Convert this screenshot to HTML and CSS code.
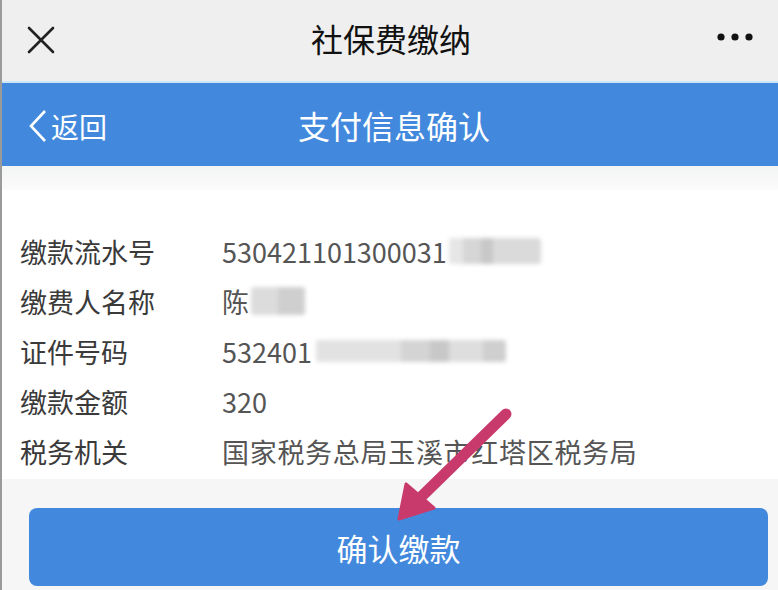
FILE: index.html
```html
<!DOCTYPE html>
<html lang="zh">
<head>
<meta charset="utf-8">
<link rel="stylesheet" href="styles.css">
</head>
<body>
<div class="page">
  <header class="topbar">
    <svg class="close" width="30" height="30" viewBox="0 0 30 30"><path d="M3 3 L27 27 M27 3 L3 27" stroke="#222" stroke-width="2.6" stroke-linecap="round" fill="none"/></svg>
    <div class="toptitle">社保费缴纳</div>
    <svg class="more" width="40" height="10" viewBox="0 0 40 10"><circle cx="4" cy="5" r="3.6" fill="#111"/><circle cx="18" cy="5" r="3.6" fill="#111"/><circle cx="32" cy="5" r="3.6" fill="#111"/></svg>
  </header>
  <nav class="bluebar">
    <div class="back">
      <svg width="20" height="34" viewBox="0 0 20 34"><path d="M17 2 L3 17 L17 32" stroke="#fff" stroke-width="2.6" fill="none" stroke-linejoin="miter"/></svg>
      <span>返回</span>
    </div>
    <div class="bluetitle">支付信息确认</div>
  </nav>
  <div class="strip"></div>
  <main class="content">
    <div class="row"><span class="label">缴款流水号</span><span class="value">530421101300031<span class="blur b1"></span></span></div>
    <div class="row"><span class="label">缴费人名称</span><span class="value">陈<span class="blur b2"></span></span></div>
    <div class="row"><span class="label">证件号码</span><span class="value">532401<span class="blur b3"></span></span></div>
    <div class="row"><span class="label">缴款金额</span><span class="value">320</span></div>
    <div class="row"><span class="label">税务机关</span><span class="value cjk">国家税务总局玉溪市红塔区税务局</span></div>
  </main>
  <footer class="footer">
    <button class="confirm">确认缴款</button>
  </footer>
  <svg class="arrow" width="778" height="590" viewBox="0 0 778 590">
    <path d="M506 414 L420 498" stroke="#c93a6c" stroke-width="11" stroke-linecap="round" fill="none"/>
    <path d="M399 519 L406 484 L434 508 Z" fill="#c93a6c" stroke="#c93a6c" stroke-width="3" stroke-linejoin="round"/>
  </svg>
</div>
</body>
</html>
```
FILE: styles.css
```css
* { box-sizing: border-box; margin: 0; padding: 0; }
html, body { width: 778px; height: 590px; overflow: hidden; }
body {
  font-family: "Noto Sans CJK SC", "Noto Sans", sans-serif;
  background: #fff;
}
.page {
  position: relative;
  width: 778px;
  height: 590px;
  border-left: 2px solid #9a9a9a;
  display: flex;
  flex-direction: column;
}
.topbar {
  height: 83px;
  background: #efefef;
  border-bottom: 2px solid #cfe6f6;
  display: flex;
  align-items: center;
  justify-content: space-between;
  padding: 0 21px 4px 24px;
  position: relative;
}
.toptitle {
  position: absolute;
  left: 0; right: 0;
  top: 18px;
  text-align: center;
  font-size: 32px;
  line-height: 40px;
  color: #111;
  pointer-events: none;
  padding-left: 2px;
}
.close { margin-top: 2px; }
.more { margin-top: -4px; }
.bluebar {
  height: 83px;
  background: #4289dd;
  display: flex;
  align-items: center;
  position: relative;
  padding-left: 26px;
}
.back {
  display: flex;
  align-items: center;
  gap: 3px;
  color: #fff;
  font-size: 28px;
  margin-top: 2px;
}
.bluetitle {
  position: absolute;
  left: 0; right: 0;
  top: 22px;
  text-align: center;
  color: #fff;
  font-size: 32px;
  line-height: 40px;
  padding-left: 8px;
}
.strip {
  height: 24px;
  background: linear-gradient(#f3f4f4, #fbfbfb);
}
.content {
  background: #fff;
  padding: 36px 0 0 18px;
  height: 289px;
}
.row {
  display: flex;
  align-items: center;
  height: 50px;
  font-size: 27px;
}
.label {
  width: 202px;
  color: #3a3a3a;
}
.value {
  color: #555;
  display: flex;
  align-items: center;
}
.cjk { letter-spacing: 0.7px; }
.blur {
  display: inline-block;
  filter: blur(2px);
  border-radius: 3px;
}
.b1 {
  width: 92px; height: 26px;
  background: linear-gradient(90deg, #e6e6e6 0 15%, #d6d6d6 15% 35%, #c8c8c8 35% 48%, #dadada 48% 100%);
  margin-left: 2px;
}
.b2 {
  width: 54px; height: 28px;
  background: linear-gradient(90deg, #dcdcdc 0 50%, #cfcfcf 50% 100%);
  margin-left: 2px;
}
.b3 {
  width: 190px; height: 22px;
  background: linear-gradient(90deg, #e2e2e2 0 45%, #d4d4d4 45% 60%, #c8c8c8 60% 70%, #dedede 70% 88%, #cfcfcf 88% 100%);
  margin-left: 4px;
}
.footer {
  flex: 1;
  background: #f6f6f6;
  padding: 29px 8px 0 27px;
}
.confirm {
  width: 739px;
  height: 78px;
  border: none;
  border-radius: 8px;
  background: #4289dd;
  color: #fff;
  font-family: inherit;
  font-size: 31px;
}
.arrow {
  position: absolute;
  left: -2px; top: 0;
  pointer-events: none;
}
```
